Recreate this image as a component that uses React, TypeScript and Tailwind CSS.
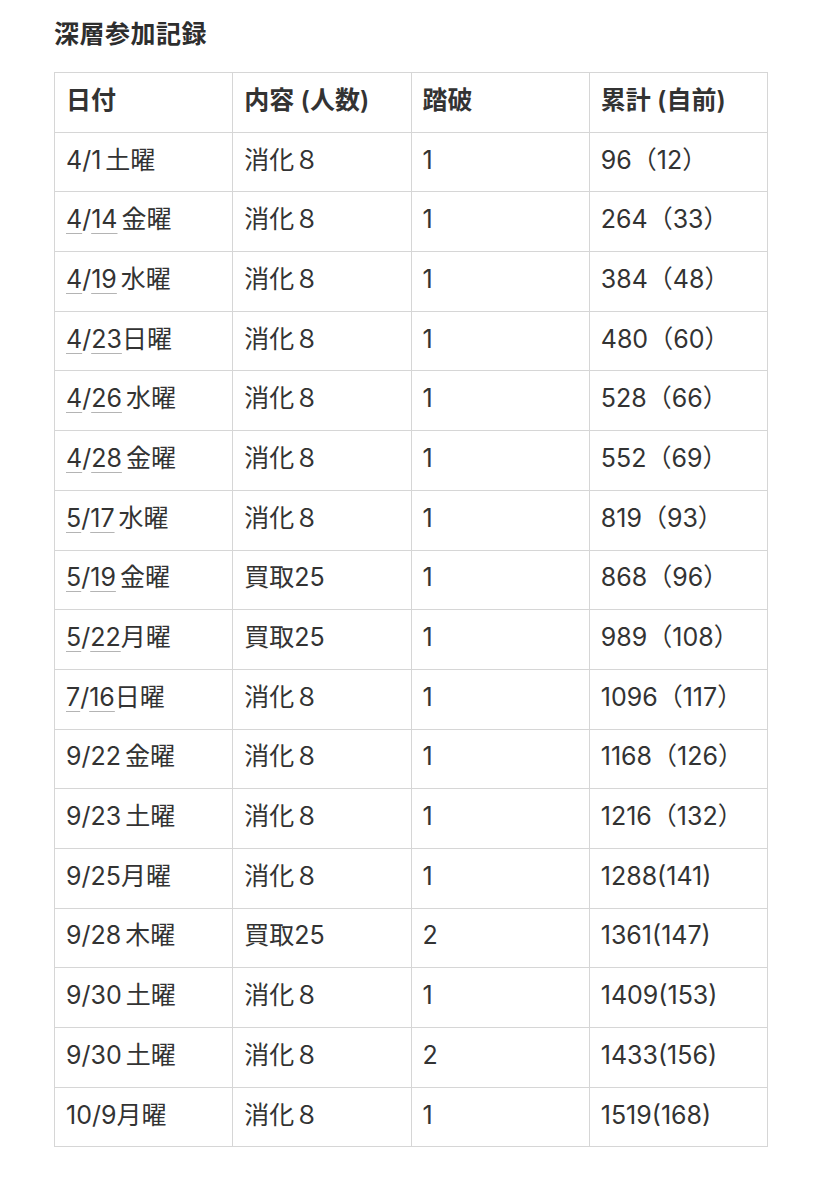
import React from "react";

type Row = {
  month: string;
  day: string;
  week: string;
  linked: boolean;
  content: string;
  count: string;
  total: string;
};

const rows: Row[] = [
  { month: "4", day: "1", week: "土曜", linked: false, content: "消化８", count: "1", total: "96（12）" },
  { month: "4", day: "14", week: "金曜", linked: true, content: "消化８", count: "1", total: "264（33）" },
  { month: "4", day: "19", week: "水曜", linked: true, content: "消化８", count: "1", total: "384（48）" },
  { month: "4", day: "23", week: "日曜", linked: true, content: "消化８", count: "1", total: "480（60）" },
  { month: "4", day: "26", week: "水曜", linked: true, content: "消化８", count: "1", total: "528（66）" },
  { month: "4", day: "28", week: "金曜", linked: true, content: "消化８", count: "1", total: "552（69）" },
  { month: "5", day: "17", week: "水曜", linked: true, content: "消化８", count: "1", total: "819（93）" },
  { month: "5", day: "19", week: "金曜", linked: true, content: "買取25", count: "1", total: "868（96）" },
  { month: "5", day: "22", week: "月曜", linked: true, content: "買取25", count: "1", total: "989（108）" },
  { month: "7", day: "16", week: "日曜", linked: true, content: "消化８", count: "1", total: "1096（117）" },
  { month: "9", day: "22", week: "金曜", linked: false, content: "消化８", count: "1", total: "1168（126）" },
  { month: "9", day: "23", week: "土曜", linked: false, content: "消化８", count: "1", total: "1216（132）" },
  { month: "9", day: "25", week: "月曜", linked: false, content: "消化８", count: "1", total: "1288(141)" },
  { month: "9", day: "28", week: "木曜", linked: false, content: "買取25", count: "2", total: "1361(147)" },
  { month: "9", day: "30", week: "土曜", linked: false, content: "消化８", count: "1", total: "1409(153)" },
  { month: "9", day: "30", week: "土曜", linked: false, content: "消化８", count: "2", total: "1433(156)" },
  { month: "10", day: "9", week: "月曜", linked: false, content: "消化８", count: "1", total: "1519(168)" },
];

const cell = "border border-[#d6d6d6] h-[59.7px] pl-[11px] pr-2 pb-[4px] align-middle text-left";
const link = "underline decoration-[#b4b4b4] decoration-1 underline-offset-[5px]";

// 日・月 sit tight against the date, the other weekday glyphs have a bit of air
const spaced = (w: string) => !w.startsWith("日") && !w.startsWith("月");

export default function App() {
  return (
    <div className="min-h-[1200px] bg-white pl-[54px] pt-[12px] text-[#333333] font-['Inter','Noto_Sans_CJK_JP',sans-serif]">
      <h1 className="text-[25px] leading-[40px] tracking-[0.5px] font-bold font-['Noto_Sans_CJK_JP',sans-serif] text-[#2e2e2e]">深層参加記録</h1>
      <table className="mt-[20px] table-fixed border-collapse w-[714px] text-[25px] leading-none">
        <thead>
          <tr>
            <th className={cell + " font-semibold"}>日付</th>
            <th className={cell + " font-semibold"}>内容 (人数)</th>
            <th className={cell + " font-semibold"}>踏破</th>
            <th className={cell + " font-semibold"}>累計 (自前)</th>
          </tr>
        </thead>
        <tbody>
          {rows.map((r, i) => (
            <tr key={i}>
              <td className={cell}>
                {r.linked ? (
                  <>
                    <span className={link}>{r.month}</span>/<span className={link}>{r.day}</span>
                  </>
                ) : (
                  <>
                    {r.month}/{r.day}
                  </>
                )}
                <span className={spaced(r.week) ? "ml-[4px]" : ""}>{r.week}</span>
              </td>
              <td className={cell}>{r.content}</td>
              <td className={cell}>{r.count}</td>
              <td className={cell}>{r.total}</td>
            </tr>
          ))}
        </tbody>
      </table>
    </div>
  );
}
